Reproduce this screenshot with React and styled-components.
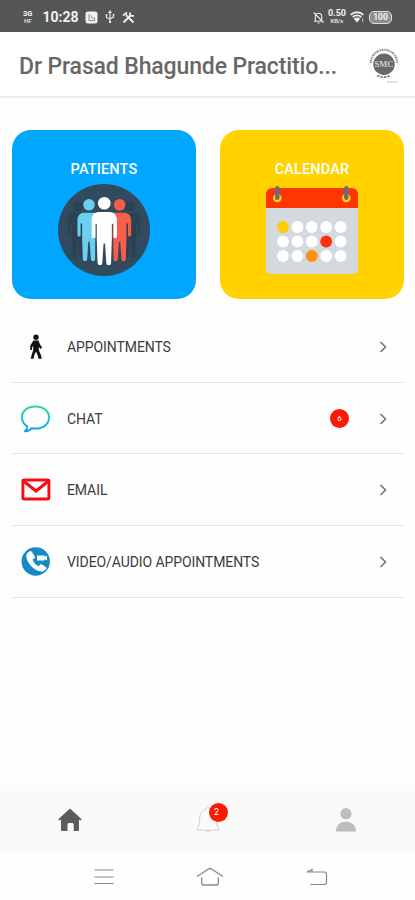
import React from 'react'
import styled, { createGlobalStyle } from 'styled-components'

// Styles
const GlobalStyle = createGlobalStyle`
    * {
        box-sizing: border-box;
    }
    body {
        margin: 0;
        background-color: #fff;
        font-family: Roboto, "Liberation Sans", sans-serif;
    }
`
const Screen = styled.div`
    width: 415px;
    height: 900px;
    display: flex;
    flex-direction: column;
    background-color: #fefefe;
    overflow: hidden;
`
const StatusBar = styled.div`
    height: 32px;
    flex: none;
    background-color: #555756;
    color: #f2f2f2;
    display: flex;
    justify-content: space-between;
    align-items: center;
    padding: 2px 23px 0 23px;
`
const StatusGroup = styled.div`
    display: flex;
    align-items: center;
    gap: ${props => props.$gap};
`
const Stack = styled.div`
    display: flex;
    flex-direction: column;
    align-items: center;
    font-size: ${props => props.$size};
    font-weight: 700;
    line-height: 7px;
`
const Small = styled.span`
    font-size: 6px;
    line-height: 7px;
    opacity: .85;
`
const Clock = styled.span`
    font-size: 14px;
    font-weight: 700;
    line-height: 16px;
    margin: 0 -1px 0 3px;
`
const Header = styled.header`
    height: 66px;
    flex: none;
    display: flex;
    justify-content: space-between;
    align-items: center;
    padding: 0 13px 0 19px;
    background-color: #fff;
    border-bottom: 2px solid #ededed;
`
const Title = styled.h1`
    margin: 5px 0 0;
    font-size: 23px;
    font-weight: 500;
    line-height: 30px;
    letter-spacing: -.13px;
    color: #676767;
    white-space: nowrap;
`
const Tiles = styled.div`
    display: grid;
    grid-template-columns: 1fr 1fr;
    gap: 24px;
    padding: 32px 11px 0 12px;
    flex: none;
`
const Tile = styled.div`
    height: 169px;
    border-radius: 19px;
    background-color: ${props => props.$color};
    display: flex;
    flex-direction: column;
    align-items: center;
    padding-top: 30px;
`
const TileLabel = styled.div`
    color: #fff;
    font-size: 14.5px;
    font-weight: 500;
    line-height: 20px;
    letter-spacing: .15px;
    margin-bottom: 4px;
`
const List = styled.ul`
    list-style: none;
    margin: 12px 11px 0 11px;
    padding: 0;
    flex: 1;
`
const Row = styled.li`
    height: 71.7px;
    display: flex;
    align-items: center;
    border-bottom: 1.5px solid #e6e6e6;
    padding: 1px 17px 0 9px;
`
const RowIcon = styled.div`
    width: 31px;
    height: 30px;
    display: flex;
    justify-content: center;
    align-items: center;
    margin-right: 16px;
`
const RowLabel = styled.span`
    flex: 1;
    font-size: 14px;
    line-height: 20px;
    color: #3c3c3c;
    letter-spacing: -.09px;
`
const Badge = styled.span`
    width: 19px;
    height: 19px;
    border-radius: 50%;
    background-color: #fb1a06;
    color: #fff;
    font-size: ${props => props.$size};
    line-height: 19px;
    text-align: center;
`
const RowBadge = styled(Badge)`
    margin-right: 30px;
`
const TabBar = styled.nav`
    height: 67px;
    flex: none;
    display: grid;
    grid-template-columns: repeat(3, 1fr);
    background-color: #fafafa;
`
const Tab = styled.div`
    display: flex;
    justify-content: center;
    align-items: center;
    padding: 3px 0 0 1px;
`
const BellWrap = styled.div`
    position: relative;
    width: 24px;
    height: 28px;
`
const BellBadge = styled(Badge)`
    position: absolute;
    top: -3px;
    left: 13px;
    padding-right: 4px;
`
const SystemBar = styled.div`
    height: 48px;
    flex: none;
    display: flex;
    justify-content: space-between;
    align-items: center;
    padding: 1px 87px 0 94px;
`

// Icons
const BoxIcon = () => (
  <svg width="13" height="13" viewBox="0 0 13 13">
    <rect x=".5" y=".5" width="12" height="12" rx="2.5" fill="#f2f2f2" />
    <path d="M4 3v6.5h5.5V7H6.5M6.5 4.5v2" fill="none" stroke="#999" strokeWidth="1.2" />
  </svg>
)

const UsbIcon = () => (
  <svg width="10" height="14" viewBox="0 0 10 14" fill="none" stroke="#e8e8e8" strokeWidth="1.2">
    <path d="M5 2v10M1.5 5v2.5L5 9.5M8.5 5v2L5 8.7" />
    <path d="M3 3l2-3 2 3zM4 11h2v2H4zM.7 4h1.6v1.6H.7zM7.7 4h1.6v1.6H7.7z" fill="#e8e8e8" stroke="none" />
  </svg>
)

const ToolsIcon = () => (
  <svg width="13" height="13" viewBox="0 0 13 13" fill="none" stroke="#eee" strokeWidth="1.9">
    <path d="M1.5 11.5L8.5 4.5M11.5 11.5L4 4" />
    <path d="M1 4.5L5 1.5M8 1.5v3.3h4" strokeWidth="1.8" />
  </svg>
)

const MutedBellIcon = () => (
  <svg width="11" height="13" viewBox="0 0 11 13" fill="none" stroke="#ececec" strokeWidth="1.1">
    <path d="M2.3 10V5.5a3.2 3.2 0 016.4 0V10M1 10.2h9M4.5 12h2M.7 1.5l9.8 10" />
  </svg>
)

const WifiIcon = () => (
  <svg width="15" height="12" viewBox="0 0 15 12">
    <path d="M.7 3.8a9 9 0 0112.6 0M2.7 6a6.3 6.3 0 018.6 0" fill="none" stroke="#efefef" strokeWidth="1.8" />
    <path d="M3.8 7.8a4.6 4.6 0 016.4 0L7 11.5z" fill="#efefef" />
    <path d="M12.7 7v4" stroke="#bbb" />
  </svg>
)

const Battery = styled.span`
    width: 23px;
    height: 13px;
    border: 1.2px solid #dedede;
    border-radius: 5px;
    background-color: #8d8e8d;
    font-size: 8.5px;
    font-weight: 700;
    line-height: 11px;
    text-align: center;
`

const Logo = () => (
  <svg width="36" height="40" viewBox="0 0 36 40">
    <circle cx="18" cy="20.2" r="15" fill="none" stroke="#e2e2e2" strokeWidth=".5" />
    <path d="M4.800 19a13.200 13.200 0 0126.400 0" fill="none" stroke="#8b8b8b" strokeWidth="2" strokeDasharray="1.100 .7 1.600 .6 .8 .7" />
    <circle cx="18" cy="20.200" r="10.700" fill="#686868" />
    <path d="M11 31.500q7 3 13.500 0" fill="none" stroke="#858585" strokeWidth="1.800" strokeDasharray="2.500 1" />
    <text x="18" y="23" fontFamily="Liberation Serif, serif" fontSize="8.500" fontWeight="700" fill="#d0d0d0" textAnchor="middle">SMC</text>
    <path d="M21 38h11" stroke="#ccc" strokeWidth="1.300" strokeDasharray="2 .8" />
  </svg>
)

const Person = ({ x, y, scale, color }) => (
  <g transform={`translate(${x} ${y}) scale(${scale})`} fill={color}>
    <circle cx="0" cy="0" r="6.200" />
    <path d="M-5 8.500H5C9.800 8.500 12.400 11.800 12.400 16.800V32.500A1.700 1.700 0 019 32.500V20H7.400V35L6.600 58.500A2.300 2.300 0 012 58.500L.7 39.500H-.7L-2 58.500A2.300 2.300 0 01-6.600 58.500L-7.400 35V20H-9V32.500A1.700 1.700 0 01-12.400 32.500V16.800C-12.400 11.800-9.800 8.500-5 8.500z" />
  </g>
)

const PatientsIcon = () => (
  <svg width="92" height="92" viewBox="0 0 92 92">
    <circle cx="46" cy="46" r="46" fill="#324a5e" />
    <Person x={20} y={22} scale={0.84} color="#2b4154" />
    <Person x={72} y={22} scale={0.84} color="#2b4154" />
    <Person x={31} y={20.8} scale={0.93} color="#6dcff0" />
    <Person x={61.6} y={20.8} scale={0.93} color="#fb5e48" />
    <path d="M37.300 54H55.300V80H37.300z" fill="#324a5e" />
    <Person x={46.3} y={19.3} scale={1.02} color="#fff" />
  </svg>
)

const dotColors = { 0: '#ffcd00', 8: '#f8330d', 12: '#ff9208' }

const CalendarIcon = () => (
  <svg width="92" height="92" viewBox="0 0 92 92">
    <path d="M0 24h92v61a5 5 0 01-5 5H5a5 5 0 01-5-5z" fill="#d4d8df" />
    <path d="M0 24V10a6 6 0 016-6h80a6 6 0 016 6v14z" fill="#ff3600" />
    {[11.3, 80.3].map(x => (
      <g key={x}>
        <circle cx={x} cy="14" r="4.3" fill="#ffd21a" />
        <rect x={x - 2.2} y="2" width="4.4" height="14" rx="2.2" fill="#666d7e" />
      </g>
    ))}
    {Array.from({ length: 15 }, (_, i) => (
      <circle key={i} cx={17 + (i % 5) * 14.4} cy={43 + Math.floor(i / 5) * 14.5} r="5.9" fill={dotColors[i] || '#fff'} />
    ))}
  </svg>
)

const WalkIcon = () => (
  <svg width="14" height="26" viewBox="0 0 14 26">
    <circle cx="7" cy="3.2" r="2.7" fill="#111" />
    <path d="M4.500 6.500h5l1.300 3.500 2.200 3.500-1.200 1.500L9.700 13l.2 3.500 1.900 4 1 4.200H9.600L8.600 21 7 17.500 5.300 21l-.8 3.700H1.700l1.100-4.500 1.400-4V12l-1.200 1.500v2.500H1.300v-4.500z" fill="#111" />
  </svg>
)

const ChatIcon = () => (
  <svg width="31" height="30" viewBox="0 0 31 30">
    <defs>
      <linearGradient id="chat" x1="0" y1="0" x2="0" y2="1">
        <stop offset="0" stopColor="#2ddc84" />
        <stop offset=".5" stopColor="#18c9d0" />
        <stop offset="1" stopColor="#1699e8" />
      </linearGradient>
    </defs>
    <path d="M15.5 2.5C7.7 2.5 2 7 2 13.2c0 4 2 7.1 5.2 9.2.2 1.8-.6 3.3-2.2 4.8 2.8.2 5-.9 6.7-3 1.2.3 2.5.4 3.8.4C23.3 24.6 29 20 29 13.5S23.3 2.5 15.5 2.5z" fill="none" stroke="url(#chat)" strokeWidth="2" strokeLinejoin="round" />
  </svg>
)

const MailIcon = () => (
  <svg width="30" height="24" viewBox="0 0 30 24">
    <rect x="1.9" y="2" width="26" height="19" rx="1" fill="#fff" stroke="#f40d12" strokeWidth="2.9" />
    <path d="M3 3.5l12 9.500L27 3.500" fill="none" stroke="#f40d12" strokeWidth="3" />
  </svg>
)

const CallIcon = () => (
  <svg width="30" height="30" viewBox="0 0 30 30">
    <circle cx="14.7" cy="14.5" r="14.2" fill="#168bc3" />
    <path d="M8.700 4.200L6.300 6c-2 2-.8 7.500 3 12 3.900 4.600 9.400 7.300 12.900 6.200l3-2.300c.5-.5.4-1.200-.2-1.700l-4-2.800c-.7-.4-1.200-.3-1.700.2l-1.800 1.600c-2.700-1.100-4.800-3.500-6-6.400l2-1.600c.6-.5.7-1 .4-1.700L10.700 4.800c-.4-.8-1.200-1-2-.6z" fill="#fff" />
    <path d="M16 8.500h7.500v1.300L26 8.700v4.600l-2.500-1v1.200H16z" fill="#fff" />
  </svg>
)

const Chevron = () => (
  <svg width="8" height="12" viewBox="0 0 8 12">
    <path d="M1.5 1l5 5-5 5" fill="none" stroke="#777" strokeWidth="1.7" />
  </svg>
)

const HomeIcon = () => (
  <svg width="24" height="24" viewBox="0 0 24 24">
    <path d="M12 .5L23.7 11.3 22.5 12.5 21 11.500V22a1 1 0 01-1 1h-4.300v-6.500a1.500 1.500 0 00-1.500-1.500h-3.200A1.500 1.500 0 009.500 16.500V23H4a1 1 0 01-1-1V11.500l-1.500 1L.3 11.3z" fill="#5b5d5c" />
  </svg>
)

const BellIcon = () => (
  <svg width="24" height="28" viewBox="0 0 24 28" fill="none" stroke="#d2d2d2" strokeWidth="1">
    <path d="M12 1.5c-1.3 0-2 .6-2 1.7C6.500 4 4 6.800 3.800 11c-.2 6-.8 9.500-3 13h22.400c-2.200-3.500-2.800-7-3-13-.2-4.200-2.700-7-6.200-7.800 0-1.100-.7-1.700-2-1.700z" />
    <path d="M9.5 24a2.600 2.600 0 005 0" />
  </svg>
)

const UserIcon = () => (
  <svg width="22" height="24" viewBox="0 0 22 24" fill="#bdbdbd">
    <circle cx="11" cy="5.7" r="5.6" />
    <path d="M.8 23.5C1.3 17 5.5 13.5 11 13.5S20.7 17 21.2 23.5z" />
  </svg>
)

const MenuIcon = () => (
  <svg width="20" height="18" viewBox="0 0 20 18" stroke="#888" strokeWidth="1.2">
    <path d="M.5 2h19M.5 9h19M.5 15.5h19" />
  </svg>
)

const HomeOutlineIcon = () => (
  <svg width="28" height="20" viewBox="0 0 28 20" fill="none" stroke="#888" strokeWidth="1.3">
    <path d="M1 9.5L12.5 2q1.5-1 3 0L27 9.5M5.700 10.500V16q0 2 2 2h12.600q2 0 2-2v-5.500" />
  </svg>
)

const BackIcon = () => (
  <svg width="22" height="18" viewBox="0 0 22 18" fill="none" stroke="#888" strokeWidth="1.2">
    <path d="M1 4h17q2.500 0 2.500 2.500v7.500q0 2.500-2.500 2.500H4M1 4l5-2.500V4" />
  </svg>
)

const rows = [
  { label: 'APPOINTMENTS', icon: <WalkIcon /> },
  { label: 'CHAT', icon: <ChatIcon />, badge: 6 },
  { label: 'EMAIL', icon: <MailIcon /> },
  { label: 'VIDEO/AUDIO APPOINTMENTS', icon: <CallIcon /> },
]

const App = () => {
  return (
    <Screen>
        <GlobalStyle />
        <StatusBar>
            <StatusGroup $gap="7px">
                <Stack $size="7.5px">3G<Small>HF</Small></Stack>
                <Clock>10:28</Clock>
                <BoxIcon />
                <UsbIcon />
                <ToolsIcon />
            </StatusGroup>
            <StatusGroup $gap="4px">
                <MutedBellIcon />
                <Stack $size="9px">0.50<Small>KB/s</Small></Stack>
                <WifiIcon />
                <Battery>100</Battery>
            </StatusGroup>
        </StatusBar>
        <Header>
            <Title>Dr Prasad Bhagunde Practitio...</Title>
            <Logo />
        </Header>
        <Tiles>
            <Tile $color="#01a6ff">
                <TileLabel>PATIENTS</TileLabel>
                <PatientsIcon />
            </Tile>
            <Tile $color="#ffd200">
                <TileLabel>CALENDAR</TileLabel>
                <CalendarIcon />
            </Tile>
        </Tiles>
        <List>
            {rows.map(row => (
                <Row key={row.label}>
                    <RowIcon>{row.icon}</RowIcon>
                    <RowLabel>{row.label}</RowLabel>
                    {row.badge && <RowBadge $size="8px">{row.badge}</RowBadge>}
                    <Chevron />
                </Row>
            ))}
        </List>
        <TabBar>
            <Tab><HomeIcon /></Tab>
            <Tab>
                <BellWrap>
                    <BellIcon />
                    <BellBadge $size="9px">2</BellBadge>
                </BellWrap>
            </Tab>
            <Tab><UserIcon /></Tab>
        </TabBar>
        <SystemBar>
            <MenuIcon />
            <HomeOutlineIcon />
            <BackIcon />
        </SystemBar>
    </Screen>
  )
}

export default App
